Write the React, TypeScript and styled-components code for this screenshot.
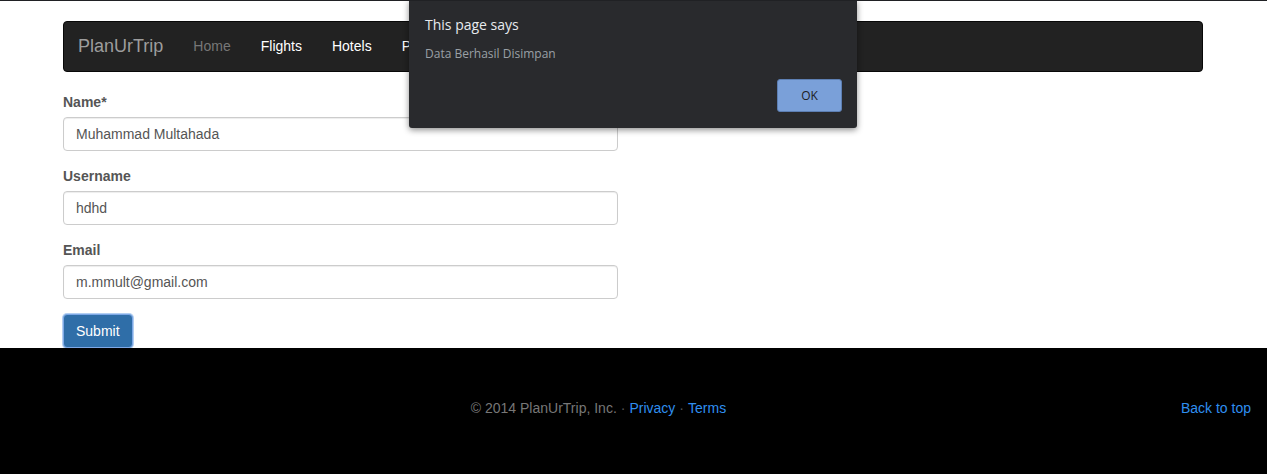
import React from "react";
import styled, { createGlobalStyle } from "styled-components";

const Global = createGlobalStyle`
  html, body { margin: 0; padding: 0; background: #fff; }
  body {
    font-family: "Liberation Sans", Arial, sans-serif;
    font-size: 14px;
    line-height: 1.42857;
    color: #333;
    border-top: 1px solid #202124;
    min-height: 474px;
    display: flex;
    flex-direction: column;
  }
  #root { flex: 1; display: flex; flex-direction: column; }
  * { box-sizing: border-box; }
`;

const Page = styled.div`
  flex: 1;
  display: flex;
  flex-direction: column;
  position: relative;
`;

const Container = styled.div`
  width: 1140px;
  margin-left: calc((100% - 1141px) / 2);
`;

const Navbar = styled.nav`
  margin-top: 20px;
  margin-bottom: 20px;
  height: 51px;
  background: #222;
  border: 1px solid #080808;
  border-radius: 4px;
  display: flex;
  align-items: center;
  padding: 0 14px;
`;

const Brand = styled.a`
  font-size: 18px;
  color: #9d9d9d;
  padding-right: 15px;
  text-decoration: none;
`;

const NavLink = styled.a<{ $muted?: boolean }>`
  padding: 0 15px;
  font-size: 14px;
  color: ${(p) => (p.$muted ? "#777" : "#fff")};
  text-decoration: none;
`;

const Form = styled.form`
  width: 555px;
`;

const Group = styled.div`
  margin-bottom: 15px;
  display: flex;
  flex-direction: column;
  align-items: flex-start;
`;

const Label = styled.label`
  font-weight: bold;
  color: #555;
  margin-bottom: 5px;
  line-height: 20px;
`;

const Input = styled.input`
  width: 100%;
  height: 34px;
  padding: 6px 12px;
  font-family: inherit;
  font-size: 14px;
  color: #555;
  border: 1px solid #ccc;
  border-radius: 4px;
  box-shadow: inset 0 1px 1px rgba(0, 0, 0, 0.075);
  outline: none;
`;

const SubmitButton = styled.button`
  height: 34px;
  padding: 6px 12px;
  font-family: inherit;
  font-size: 14px;
  color: #fff;
  background: #2f6ea8;
  border: 1px solid #7ea8e6;
  border-radius: 4px;
  box-shadow: 0 0 0 1px rgba(102, 160, 230, 0.5);
  display: block;
`;

const Footer = styled.footer`
  flex: 1;
  background: #000;
  padding: 50px 16px;
  display: flex;
  align-items: flex-start;
  line-height: 20px;
`;

const FooterText = styled.p`
  flex: 1;
  margin: 0;
  text-align: center;
  color: #777;
`;

const FooterLink = styled.a`
  color: #2f8ff0;
  text-decoration: none;
`;

const Sep = styled.span`
  color: #555;
  margin: 0 4px;
`;

const Dialog = styled.div`
  position: absolute;
  top: -1px;
  left: 409px;
  width: 448px;
  height: 128px;
  background: #292a2d;
  border-radius: 0 0 3px 3px;
  box-shadow: 0 2px 6px rgba(0, 0, 0, 0.45);
  padding: 14px 16px 16px;
  display: flex;
  flex-direction: column;
  font-family: "Open Sans", "Noto Sans", sans-serif;
`;

const DialogTitle = styled.div`
  font-size: 14px;
  color: #e8eaed;
  line-height: 22px;
`;

const DialogMessage = styled.div`
  margin-top: 10px;
  font-size: 12px;
  color: #9aa0a6;
  line-height: 16px;
`;

const DialogActions = styled.div`
  margin-top: auto;
  display: flex;
  justify-content: flex-end;
`;

const OkButton = styled.button`
  width: 65px;
  height: 33px;
  margin-right: -1px;
  background: #7aa0d9;
  border: 1px solid #5d7fb3;
  border-radius: 3px;
  color: #202124;
  font-family: "Open Sans", "Noto Sans", sans-serif;
  font-size: 12px;
`;

export default function App() {
  return (
    <>
      <Global />
      <Page>
        <Container>
          <Navbar>
            <Brand href="#">PlanUrTrip</Brand>
            <NavLink href="#" $muted>Home</NavLink>
            <NavLink href="#">Flights</NavLink>
            <NavLink href="#">Hotels</NavLink>
            <NavLink href="#">Promo</NavLink>
          </Navbar>
          <Form onSubmit={(e) => e.preventDefault()}>
            <Group>
              <Label>Name*</Label>
              <Input defaultValue="Muhammad Multahada" />
            </Group>
            <Group>
              <Label>Username</Label>
              <Input defaultValue="hdhd" />
            </Group>
            <Group>
              <Label>Email</Label>
              <Input defaultValue="m.mmult@gmail.com" />
            </Group>
            <SubmitButton type="submit">Submit</SubmitButton>
          </Form>
        </Container>
        <Footer>
          <FooterText>
            © 2014 PlanUrTrip, Inc.<Sep>·</Sep>
            <FooterLink href="#">Privacy</FooterLink>
            <Sep>·</Sep>
            <FooterLink href="#">Terms</FooterLink>
          </FooterText>
          <FooterLink href="#">Back to top</FooterLink>
        </Footer>
        <Dialog>
          <DialogTitle>This page says</DialogTitle>
          <DialogMessage>Data Berhasil Disimpan</DialogMessage>
          <DialogActions>
            <OkButton>OK</OkButton>
          </DialogActions>
        </Dialog>
      </Page>
    </>
  );
}
